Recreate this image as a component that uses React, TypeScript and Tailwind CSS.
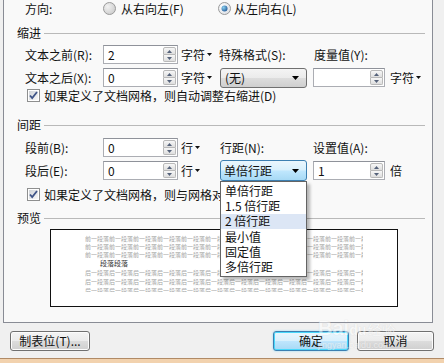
import React from "react";

const TriDown = () => (
  <svg width="7" height="4" viewBox="0 0 7 4">
    <path d="M0 0h7L3.5 4z" fill="#000" />
  </svg>
);

const UnitArrow = () => (
  <svg width="5" height="3" viewBox="0 0 5 3" className="ml-[2px]">
    <path d="M0 0h5L2.5 3z" fill="#111" />
  </svg>
);

function Spinner() {
  return (
    <div className="ml-auto mr-[1px] flex h-[15px] w-[13px] flex-col">
      <div className="flex flex-1 items-center justify-center rounded-t-[2px] border border-[#b9b9b9] bg-[linear-gradient(#f7f7f7,#dedede)]">
        <svg width="5" height="3" viewBox="0 0 5 3">
          <path d="M0 3h5L2.5 0z" fill="#55627a" />
        </svg>
      </div>
      <div className="flex flex-1 items-center justify-center rounded-b-[2px] border border-t-0 border-[#b9b9b9] bg-[linear-gradient(#f7f7f7,#dedede)]">
        <svg width="5" height="3" viewBox="0 0 5 3">
          <path d="M0 0h5L2.5 3z" fill="#55627a" />
        </svg>
      </div>
    </div>
  );
}

function SpinInput({ value, className }: { value: string; className: string }) {
  return (
    <div
      className={
        "flex h-[19px] items-center border border-[#abadb3] border-t-[#8f929a] bg-white pl-[4px] " +
        className
      }
    >
      <span className="leading-[14px]">{value}</span>
      <Spinner />
    </div>
  );
}

function Radio({ checked }: { checked?: boolean }) {
  return (
    <svg width="13" height="13" viewBox="0 0 13 13">
      <defs>
        <radialGradient id={checked ? "rg1" : "rg0"} cx="0.35" cy="0.35" r="0.8">
          <stop offset="0" stopColor={checked ? "#ffffff" : "#f2f2f2"} />
          <stop offset="1" stopColor={checked ? "#d8dce2" : "#c8c8c8"} />
        </radialGradient>
        <radialGradient id="dot" cx="0.35" cy="0.35" r="0.8">
          <stop offset="0" stopColor="#8ad0f0" />
          <stop offset="1" stopColor="#1a4f8f" />
        </radialGradient>
      </defs>
      <circle cx="6.5" cy="6.5" r="6" fill={`url(#${checked ? "rg1" : "rg0"})`} stroke="#9a9a9a" />
      {checked && <circle cx="6.5" cy="6.5" r="3" fill="url(#dot)" />}
    </svg>
  );
}

function Check() {
  return (
    <svg width="13" height="13" viewBox="0 0 13 13">
      <defs>
        <linearGradient id="cbg" x1="0" y1="0" x2="1" y2="1">
          <stop offset="0" stopColor="#cfd3d8" />
          <stop offset="1" stopColor="#f8f8f8" />
        </linearGradient>
      </defs>
      <rect x="0.5" y="0.5" width="12" height="12" fill="#fff" stroke="#8e8f8f" />
      <rect x="2" y="2" width="9" height="9" fill="url(#cbg)" />
      <path d="M3 6.5l2.2 2.6L10 3" fill="none" stroke="#3f5487" strokeWidth="1.8" />
    </svg>
  );
}

function GroupHeader({ title, className }: { title: string; className: string }) {
  return (
    <div className={"flex h-[16px] items-center pl-[13px] pr-[7px] " + className}>
      <span className="leading-[14px]">{title}</span>
      <div className="ml-[3px] h-px flex-1 bg-[#b9b9b9]" />
    </div>
  );
}

const frontLine = "前一段落".repeat(13).slice(0, 47);
const backLine = "后一段落".repeat(13).slice(0, 47);

export default function App() {
  const listItems = ["单倍行距", "1.5 倍行距", "2 倍行距", "最小值", "固定值", "多倍行距"];
  return (
    <div className="relative flex h-[363px] w-[444px] flex-col overflow-hidden bg-[#f0f0f0] font-['Noto_Sans_CJK_SC',sans-serif] text-[12px] text-[#111]">
      {/* tab page */}
      <div className="ml-[3px] flex h-[323px] w-[430px] shrink-0 flex-col border-x border-b border-[#898c95] bg-[#f9f9f9]">
        {/* direction */}
        <div className="flex h-[17px] items-center pl-[21px]">
          <span className="w-[78px] leading-[14px]">方向:</span>
          <Radio />
          <span className="ml-[5px] w-[97px] leading-[14px]">从右向左(F)</span>
          <Radio checked />
          <span className="ml-[3px] leading-[14px]">从左向右(L)</span>
        </div>

        <GroupHeader title="缩进" className="mt-[8px]" />

        <div className="mt-[4px] flex h-[19px] items-center pl-[21px]">
          <span className="w-[78px] leading-[14px]">文本之前(R):</span>
          <SpinInput value="2" className="w-[75px]" />
          <span className="ml-[3px] flex w-[38px] items-center leading-[14px]">
            字符
            <UnitArrow />
          </span>
          <span className="w-[95px] leading-[14px]">特殊格式(S):</span>
          <span className="leading-[14px]">度量值(Y):</span>
        </div>

        <div className="mt-[4px] flex h-[19px] items-center pl-[21px]">
          <span className="w-[78px] leading-[14px]">文本之后(X):</span>
          <SpinInput value="0" className="w-[75px]" />
          <span className="ml-[3px] flex w-[39px] items-center leading-[14px]">
            字符
            <UnitArrow />
          </span>
          <div className="flex h-[20px] w-[87px] items-center rounded-[3px] border border-[#707070] bg-[linear-gradient(#f4f4f4,#ebebeb_50%,#dddddd_50%,#cfcfcf)] pl-[4px] pr-[7px]">
            <span className="leading-[14px]">(无)</span>
            <span className="ml-auto">
              <TriDown />
            </span>
          </div>
          <SpinInput value="" className="ml-[6px] w-[72px]" />
          <span className="ml-[5px] flex items-center leading-[14px]">
            字符
            <UnitArrow />
          </span>
        </div>

        <div className="mt-[2px] flex h-[13px] items-center pl-[23px]">
          <Check />
          <span className="ml-[4px] leading-[14px]">如果定义了文档网格，则自动调整右缩进(D)</span>
        </div>

        <GroupHeader title="间距" className="mt-[15px]" />

        <div className="mt-[5px] flex h-[19px] items-center pl-[21px]">
          <span className="w-[78px] leading-[14px]">段前(B):</span>
          <SpinInput value="0" className="w-[75px]" />
          <span className="ml-[3px] flex w-[39px] items-center leading-[14px]">
            行
            <UnitArrow />
          </span>
          <span className="w-[93px] leading-[14px]">行距(N):</span>
          <span className="leading-[14px]">设置值(A):</span>
        </div>

        <div className="mt-[4px] flex h-[19px] items-center pl-[21px]">
          <span className="w-[78px] leading-[14px]">段后(E):</span>
          <SpinInput value="0" className="w-[75px]" />
          <span className="ml-[3px] flex w-[39px] items-center leading-[14px]">
            行
            <UnitArrow />
          </span>
          <div className="relative z-10 flex h-[21px] w-[87px] items-center rounded-[3px] border border-[#3c7fb1] bg-[linear-gradient(#eaf6fd,#d9f0fc_45%,#bee6fd_55%,#a7d9f5)] pl-[3px] pr-[7px]">
            <span className="leading-[14px]">单倍行距</span>
            <span className="ml-auto">
              <TriDown />
            </span>
            {/* open list */}
            <div className="absolute left-[-1px] top-[20px] flex h-[96px] w-[87px] flex-col border border-[#646464] bg-white py-[1px] shadow-[3px_3px_3px_rgba(0,0,0,0.28)]">
              {listItems.map((t, i) => (
                <div
                  key={t}
                  className={
                    "flex h-[15.6px] items-center pl-[4px] leading-[14px] " +
                    (i === 2 ? "bg-[#dce6f5]" : "")
                  }
                >
                  {t}
                </div>
              ))}
            </div>
          </div>
          <SpinInput value="1" className="ml-[6px] w-[72px]" />
          <span className="ml-[5px] leading-[14px]">倍</span>
        </div>

        <div className="mt-[8px] flex h-[13px] items-center pl-[23px]">
          <Check />
          <span className="ml-[4px] leading-[14px]">如果定义了文档网格，则与网格对齐(W)</span>
        </div>

        <GroupHeader title="预览" className="mt-[9px]" />

        {/* preview */}
        <div className="ml-[46px] mt-[3px] h-[78px] w-[348px] border border-[#111] bg-white pt-[5px]">
          <div className="ml-[34px] h-[57px] w-[278px] overflow-hidden text-[6px] text-[#a4a4a4]">
            <div className="h-[8px] leading-[8px] whitespace-nowrap">{frontLine}</div>
            <div className="h-[8px] leading-[8px] whitespace-nowrap">{frontLine}</div>
            <div className="h-[8px] leading-[8px] whitespace-nowrap">{frontLine}</div>
            <div className="h-[9px] pl-[15px] text-[7px] leading-[9px] text-[#333]">段落段落</div>
            <div className="h-[9px] leading-[9px] whitespace-nowrap">{backLine}</div>
            <div className="h-[9px] leading-[9px] whitespace-nowrap">{backLine}</div>
            <div className="h-[9px] leading-[9px] whitespace-nowrap">{backLine}</div>
          </div>
        </div>
      </div>

      {/* buttons */}
      <div className="mt-[8px] flex h-[20px] shrink-0 items-center">
        <button className="ml-[10px] flex h-[20px] w-[80px] items-center justify-center rounded-[3px] border border-[#707070] bg-[linear-gradient(#f4f4f4,#ebebeb_50%,#dddddd_50%,#cfcfcf)] leading-[14px] shadow-[inset_0_0_0_1px_#fcfcfc]">
          制表位(T)...
        </button>
        <button className="ml-auto flex h-[20px] w-[76px] items-center justify-center rounded-[3px] border border-[#3c7fb1] bg-[linear-gradient(#eaf6fd,#d9f0fc_50%,#bee6fd_50%,#a7d9f5)] leading-[14px] shadow-[inset_0_0_0_1px_#48d8fb,0_0_2px_#7fd6f5]">
          确定
        </button>
        <button className="ml-[8px] mr-[10px] flex h-[20px] w-[77px] items-center justify-center rounded-[3px] border border-[#707070] bg-[linear-gradient(#f4f4f4,#ebebeb_50%,#dddddd_50%,#cfcfcf)] leading-[14px] shadow-[inset_0_0_0_1px_#fcfcfc]">
          取消
        </button>
      </div>

      {/* window frame bottom */}
      <div className="mt-auto h-[5px] shrink-0 border-t border-[#b08a66] bg-[#f2d2ae]" />

      {/* watermark */}
      <div className="pointer-events-none absolute left-[318px] top-[318px] flex flex-col items-start opacity-50">
        <span className="font-['Liberation_Sans',sans-serif] text-[20px] font-bold leading-[20px] text-white [text-shadow:0_0_1px_#bbb]">
          Bai<span className="text-[14px]">du</span>
          <span className="ml-[2px] text-[14px] font-normal">经验</span>
        </span>
        <span className="font-['Liberation_Sans',sans-serif] text-[9px] leading-[10px] text-white [text-shadow:0_0_1px_#bbb]">
          jingyan.baidu.com
        </span>
      </div>
    </div>
  );
}
